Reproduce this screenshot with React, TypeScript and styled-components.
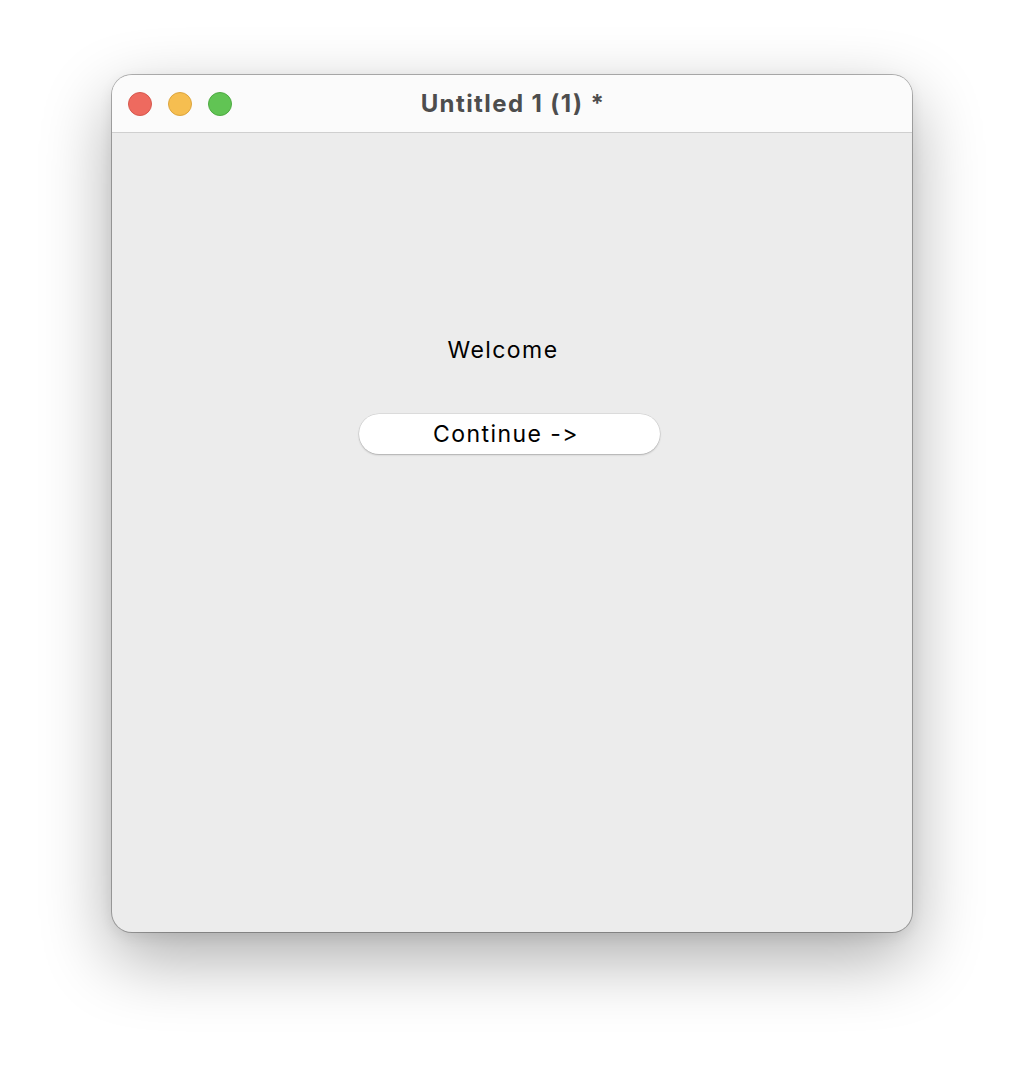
import React from "react";
import styled, { createGlobalStyle } from "styled-components";

const Global = createGlobalStyle`
  html, body { margin: 0; padding: 0; background: #ffffff; }
  body {
    font-family: Inter, "Noto Sans", "Liberation Sans", sans-serif;
    font-feature-settings: "calt" 0, "liga" 0;
    font-variant-ligatures: none;
  }
`;

const Page = styled.div`
  width: 1024px;
  height: 1080px;
  padding: 75px 0 0 112px;
  box-sizing: border-box;
`;

const Window = styled.div`
  width: 800px;
  height: 857px;
  border-radius: 20px;
  overflow: hidden;
  display: flex;
  flex-direction: column;
  background: #ececec;
  box-shadow: 0 0 0 1px rgba(0, 0, 0, 0.28), 0 26px 70px rgba(0, 0, 0, 0.33), 0 4px 14px rgba(0, 0, 0, 0.08);
`;

const TitleBar = styled.div`
  height: 57px;
  flex: none;
  position: relative;
  display: flex;
  align-items: center;
  justify-content: center;
  background: #fbfbfb;
  border-bottom: 1px solid #cfcfcf;
`;

const Lights = styled.div`
  position: absolute;
  left: 16px;
  top: 17px;
  display: flex;
  gap: 16px;
`;

const Light = styled.span<{ $fill: string; $edge: string }>`
  width: 24px;
  height: 24px;
  border-radius: 50%;
  box-sizing: border-box;
  background: ${(p) => p.$fill};
  border: 1px solid ${(p) => p.$edge};
`;

const Title = styled.div`
  font-size: 24px;
  font-weight: 700;
  color: #4d4d4d;
  letter-spacing: 1.4px;
  padding-left: 2px;
`;

const Content = styled.div`
  flex: 1;
  display: flex;
  flex-direction: column;
  align-items: center;
  padding: 203px 0 0 0;
`;

const Column = styled.div`
  display: flex;
  flex-direction: column;
  align-items: center;
  gap: 50px;
  margin-left: -6px;
`;

const Welcome = styled.div`
  font-size: 23px;
  line-height: 28px;
  letter-spacing: 1.45px;
  color: #000;
  padding-right: 12px;
`;

const Button = styled.button`
  width: 301px;
  height: 40px;
  border-radius: 20px;
  border: none;
  background: #ffffff;
  box-shadow: 0 0 0 0.5px rgba(0, 0, 0, 0.12), 0 1px 2px rgba(0, 0, 0, 0.22);
  font-family: Inter, "Noto Sans", "Liberation Sans", sans-serif;
  font-feature-settings: "calt" 0, "liga" 0;
  font-variant-ligatures: none;
  font-size: 23px;
  letter-spacing: 1.45px;
  color: #000;
  padding: 0 6px 0 0;
  cursor: pointer;
`;

export default function App() {
  return (
    <>
      <Global />
      <Page>
        <Window>
          <TitleBar>
            <Lights>
              <Light $fill="#ee6a5f" $edge="#d6584e" />
              <Light $fill="#f6be50" $edge="#dca53e" />
              <Light $fill="#61c454" $edge="#4eaa42" />
            </Lights>
            <Title>Untitled 1 (1) *</Title>
          </TitleBar>
          <Content>
            <Column>
              <Welcome>Welcome</Welcome>
              <Button>Continue -&gt;</Button>
            </Column>
          </Content>
        </Window>
      </Page>
    </>
  );
}
